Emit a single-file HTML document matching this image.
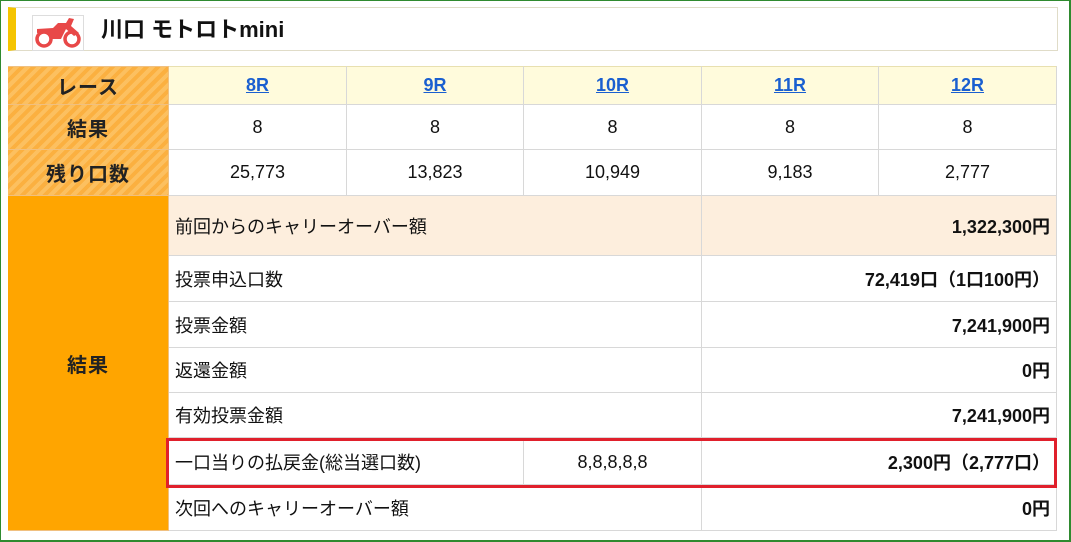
<!DOCTYPE html>
<html><head><meta charset="utf-8"><style>
*{margin:0;padding:0;box-sizing:border-box}
body{width:1071px;height:542px;background:#fff;position:relative;overflow:hidden;font-family:"Liberation Sans","Noto Sans CJK JP",sans-serif;color:#111}
.frame{position:absolute;left:0;top:0;width:1071px;height:542px;border:2px solid #2f8a2f;border-left-width:1px;border-top-width:1px}
.hdr{position:absolute;left:8px;top:7px;width:1050px;height:44px;border:1px solid #e0dcc8;border-left:8px solid #f5c400;background:#fff}
.icon{position:absolute;left:32px;top:15px;width:52px;height:36px;border:1px solid #ddd;background:#fff}
.title{position:absolute;left:101px;top:15px;font-size:22px;font-weight:bold;line-height:30px}
.c{position:absolute;border-right:1px solid #d8d8d8;border-bottom:1px solid #d8d8d8;display:flex;align-items:center;font-size:18px}
.h{background:repeating-linear-gradient(135deg,#fbb040 0 4px,#fcc060 4px 8px);justify-content:center;font-weight:bold;font-size:20px;border-color:#f0c080;letter-spacing:1px;color:#222}
.ctr{justify-content:center}
.lbl{padding-left:6px}
.r{justify-content:flex-end;padding-right:6px;font-weight:bold}
a{color:#1a5fd0;font-weight:bold;text-decoration:underline}
</style></head><body>
<div class="frame"></div>
<div class="hdr"></div>
<div class="icon"><svg width="50" height="34" viewBox="0 0 50 34"><g fill="none" stroke="#e84848" stroke-width="3.5"><circle cx="11" cy="23" r="7"/><circle cx="39" cy="23" r="7"/></g><path d="M4 13 L20 12 L25 7 L33 7 L36 2 L41 3 L38 10 L46 17 L41 20 L33 13 L28 23 L18 23 L13 16 L4 17 Z" fill="#e84848"/></svg></div>
<div class="title">川口 モトロトmini</div>

<div class="c h" style="left:8px;top:66px;width:161px;height:39px;border-top:1px solid #f0c080">レース</div>
<div class="c h" style="left:8px;top:105px;width:161px;height:45px">結果</div>
<div class="c h" style="left:8px;top:150px;width:161px;height:46px">残り口数</div>
<div class="c h" style="left:8px;top:196px;width:161px;height:335px;background:#ffa500">結果</div>

<div class="c ctr" style="left:169px;top:66px;width:178px;height:39px;background:#fffbdc;border-top:1px solid #e8e0b0"><a>8R</a></div>
<div class="c ctr" style="left:347px;top:66px;width:177px;height:39px;background:#fffbdc;border-top:1px solid #e8e0b0"><a>9R</a></div>
<div class="c ctr" style="left:524px;top:66px;width:178px;height:39px;background:#fffbdc;border-top:1px solid #e8e0b0"><a>10R</a></div>
<div class="c ctr" style="left:702px;top:66px;width:177px;height:39px;background:#fffbdc;border-top:1px solid #e8e0b0"><a>11R</a></div>
<div class="c ctr" style="left:879px;top:66px;width:178px;height:39px;background:#fffbdc;border-top:1px solid #e8e0b0"><a>12R</a></div>

<div class="c ctr" style="left:169px;top:105px;width:178px;height:45px">8</div>
<div class="c ctr" style="left:347px;top:105px;width:177px;height:45px">8</div>
<div class="c ctr" style="left:524px;top:105px;width:178px;height:45px">8</div>
<div class="c ctr" style="left:702px;top:105px;width:177px;height:45px">8</div>
<div class="c ctr" style="left:879px;top:105px;width:178px;height:45px">8</div>

<div class="c ctr" style="left:169px;top:150px;width:178px;height:46px">25,773</div>
<div class="c ctr" style="left:347px;top:150px;width:177px;height:46px">13,823</div>
<div class="c ctr" style="left:524px;top:150px;width:178px;height:46px">10,949</div>
<div class="c ctr" style="left:702px;top:150px;width:177px;height:46px">9,183</div>
<div class="c ctr" style="left:879px;top:150px;width:178px;height:46px">2,777</div>

<div class="c lbl" style="left:169px;top:196px;width:533px;height:60px;background:#fdeedd">前回からのキャリーオーバー額</div>
<div class="c r" style="left:702px;top:196px;width:355px;height:60px;background:#fdeedd">1,322,300円</div>

<div class="c lbl" style="left:169px;top:256px;width:533px;height:46px">投票申込口数</div>
<div class="c r" style="left:702px;top:256px;width:355px;height:46px">72,419口（1口100円）</div>
<div class="c lbl" style="left:169px;top:302px;width:533px;height:46px">投票金額</div>
<div class="c r" style="left:702px;top:302px;width:355px;height:46px">7,241,900円</div>
<div class="c lbl" style="left:169px;top:348px;width:533px;height:45px">返還金額</div>
<div class="c r" style="left:702px;top:348px;width:355px;height:45px">0円</div>
<div class="c lbl" style="left:169px;top:393px;width:533px;height:45px">有効投票金額</div>
<div class="c r" style="left:702px;top:393px;width:355px;height:45px">7,241,900円</div>
<div class="c lbl" style="left:169px;top:440px;width:355px;height:45px">一口当りの払戻金(総当選口数)</div>
<div class="c ctr" style="left:524px;top:440px;width:178px;height:45px">8,8,8,8,8</div>
<div class="c r" style="left:702px;top:440px;width:355px;height:45px">2,300円（2,777口）</div>
<div class="c lbl" style="left:169px;top:485px;width:533px;height:46px">次回へのキャリーオーバー額</div>
<div class="c r" style="left:702px;top:485px;width:355px;height:46px">0円</div>

<div style="position:absolute;left:166px;top:438px;width:891px;height:50px;border:3px solid #e0202c"></div>
</body></html>
